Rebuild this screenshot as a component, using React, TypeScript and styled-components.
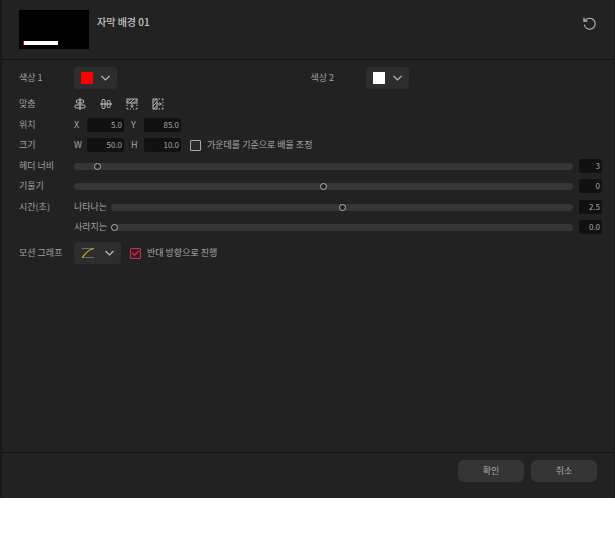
import React, { useState } from 'react';
import styled, { createGlobalStyle, css } from 'styled-components';

const GlobalStyle = createGlobalStyle`
  *, *::before, *::after { box-sizing: border-box; }
  body { margin: 0; background: #fff; }
  body, button, input {
    font-family: "Noto Sans CJK KR", sans-serif;
    font-size: 9px;
    line-height: 12px;
    color: #a6a6a6;
  }
`;

const Panel = styled.main`
  display: flex;
  flex-direction: column;
  min-height: calc(100vh - 37px);
  background: #222;
  border: solid #191919;
  border-width: 1px 1px 0 2px;
  border-top-color: #1a2523;
`;

const Header = styled.header`
  display: flex;
  align-items: flex-start;
  gap: 8px;
  padding: 9px 18px 10px 17px;
  border-bottom: 1px solid #121212;
`;

const Thumbnail = styled.div`
  display: flex;
  align-items: flex-end;
  width: 70px;
  height: 39px;
  padding: 4px;
  background: #000;
`;

const CaptionBar = styled.div`
  width: 35px;
  height: 4px;
  background: #fff;
  border-left: 1px solid #f00;
`;

const Title = styled.h1`
  flex: 1;
  margin: 5px 0 0;
  font-size: 10px;
  line-height: 14px;
  font-weight: 500;
  color: #c4c4c4;
`;

const IconButton = styled.button`
  display: flex;
  padding: 0;
  border: 0;
  background: none;
  color: #b8b8b8;
`;

const ResetButton = styled(IconButton)`
  margin-top: 7px;
`;

const Body = styled.div`
  flex: 1;
  display: flex;
  flex-direction: column;
  gap: 5px;
  padding: 7px 12px 24px 17px;
`;

const Columns = styled.div`
  display: grid;
  grid-template-columns: 1fr 1fr;
`;

const Groups = styled.div`
  display: grid;
  gap: 1px;
`;

const Row = styled.div<{ $tall?: boolean }>`
  display: grid;
  grid-template-columns: 55px 1fr;
  align-items: center;
  height: ${(p) => (p.$tall ? 22 : 20)}px;
`;

const labelText = css`
  color: #a0a0a0;
  white-space: nowrap;
`;
const Label = styled.label`${labelText}`;
const Caption = styled.span`${labelText}`;

const Controls = styled.div<{ $gap?: number }>`
  display: flex;
  align-items: center;
  gap: ${(p) => p.$gap ?? 7}px;
`;

const Axis = styled.label`
  display: grid;
  grid-template-columns: 13px 37px;
  align-items: center;
`;

const NumberBox = styled.input`
  width: 100%;
  height: 14px;
  padding: 0 2px 2px;
  border: 0;
  border-radius: 2px;
  background: #111;
  font-size: 8px;
  text-align: right;
  outline: none;
`;

const DropButton = styled.button<{ $gap?: number }>`
  display: flex;
  align-items: center;
  gap: ${(p) => p.$gap ?? 8}px;
  height: 22px;
  padding: 0 7px;
  border: 0;
  border-radius: 3px;
  background: #2d2d2d;
  color: #b8b8b8;
`;

const Swatch = styled.span<{ $color: string }>`
  width: 12px;
  height: 12px;
  background: ${(p) => p.$color};
`;

const SliderLine = styled.div<{ $named?: boolean }>`
  display: grid;
  grid-template-columns: ${(p) => (p.$named ? '37px ' : '')}1fr 23px;
  align-items: center;
`;

const thumb = css`
  appearance: none;
  width: 7px;
  height: 7px;
  border: 1px solid #b4b4b4;
  border-radius: 50%;
  background: #222;
`;

const Range = styled.input`
  appearance: none;
  width: calc(100% - 6px);
  height: 7px;
  margin: 0;
  border-radius: 4px;
  background: #363636;
  &::-webkit-slider-thumb { ${thumb} }
  &::-moz-range-thumb { ${thumb} }
`;

const CheckLabel = styled.label`
  display: flex;
  align-items: center;
  gap: 6px;
  margin-left: 2px;
  white-space: nowrap;
`;

const CheckBox = styled.input`
  appearance: none;
  display: grid;
  place-items: center;
  width: 11px;
  height: 11px;
  margin: 0;
  border: 1px solid #a8a8a8;
  border-radius: 1px;
  background: #2b2b2b;
  &:checked { border-color: #cc2f4d; background: #3c1c24; }
  &:checked::before {
    content: "";
    width: 7px;
    height: 4px;
    margin-bottom: 2px;
    border: solid #e0355a;
    border-width: 0 0 1px 1px;
    transform: rotate(-45deg);
  }
`;

const Footer = styled.footer`
  display: flex;
  justify-content: flex-end;
  gap: 7px;
  padding: 7px 17px 16px;
  border-top: 1px solid #121212;
`;

const ActionButton = styled.button`
  width: 66px;
  height: 22px;
  padding: 0;
  border: 0;
  border-radius: 6px;
  background: #353535;
`;

const Chevron = () => (
  <svg width="9" height="6" viewBox="0 0 9 6" fill="none" stroke="currentColor" strokeWidth="1.2">
    <path d="M.5 1 4.500 5 8.500 1" />
  </svg>
);

const ResetIcon = () => (
  <svg width="13" height="13" viewBox="0 0 13 13" fill="none" stroke="currentColor" strokeWidth="1.1">
    <path d="M2.300 3.300A5.500 5.500 0 1 1 1.200 7.500" />
    <path d="M1 .8v3.200h3.300" strokeWidth="1.300" />
  </svg>
);

const CenterXIcon = () => (
  <svg width="12" height="12" viewBox="0 0 12 12" fill="none" stroke="currentColor">
    <path d="M6 0v12" strokeWidth="1.200" />
    <rect x="2.500" y="2" width="7" height="3" rx="1" />
    <rect x="1" y="7" width="10" height="3" rx="1" />
  </svg>
);

const CenterYIcon = () => (
  <svg width="12" height="12" viewBox="0 0 12 12" fill="none" stroke="currentColor">
    <path d="M0 6h12" strokeWidth="1.200" />
    <rect x="2" y="1.500" width="3" height="9" rx="1" />
    <rect x="7.200" y="2.500" width="3" height="7" rx="1" />
  </svg>
);

const FillTopIcon = () => (
  <svg width="12" height="12" viewBox="0 0 12 12" fill="none" stroke="currentColor">
    <rect x="1" y="1" width="10" height="4" />
    <path d="M1 4.500 4.500 1M4 5l4-4M7.500 5 11 1.500" />
    <path d="M1 6.500V8M1 9.500V11h1.500M4 11h1M7 11h1M9.500 11H11V9.500M11 6.500V8" />
    <path d="M6 5v4.500M4.300 7.500 6 9.200l1.700-1.700" />
  </svg>
);

const FillLeftIcon = () => (
  <svg width="12" height="12" viewBox="0 0 12 12" fill="none" stroke="currentColor">
    <rect x="1" y="1" width="4" height="10" />
    <path d="M1 4.500 4.500 1M1 8l4-4M1.500 11 5 7.500" />
    <path d="M6.500 1H8M9.500 1H11v1.500M11 4v1M11 7v1M11 9.500V11H9.500M6.500 11H8" />
    <path d="M5 6h4.500M7.500 4.300 9.200 6 7.500 7.700" />
  </svg>
);

const GraphIcon = () => (
  <svg width="14" height="12" viewBox="0 0 14 12" fill="none">
    <path d="M1 1.500h12M1 10.500h12" stroke="#6c6c6c" />
    <path d="M1 10.500C4 8 6 2.500 13 1.500" stroke="#d5a32c" strokeWidth="1.200" />
  </svg>
);

const ALIGNMENTS = [
  { name: '가로 가운데', Icon: CenterXIcon },
  { name: '세로 가운데', Icon: CenterYIcon },
  { name: '너비 채움', Icon: FillTopIcon },
  { name: '높이 채움', Icon: FillLeftIcon },
];

function ColorRow({ label, color, id }: { label: string; color: string; id: string }) {
  return (
    <Row $tall>
      <Label htmlFor={id}>{label}</Label>
      <Controls>
        <DropButton id={id} type="button" aria-haspopup="dialog">
          <Swatch $color={color} />
          <Chevron />
        </DropButton>
      </Controls>
    </Row>
  );
}

function AxisField({ name, initial }: { name: string; initial: string }) {
  const [value, setValue] = useState(initial);
  return (
    <Axis>
      {name}
      <NumberBox inputMode="decimal" value={value} onChange={(e) => setValue(e.target.value)} />
    </Axis>
  );
}

interface SliderProps {
  label?: string;
  name?: string;
  id: string;
  min: number;
  max: number;
  initial: number;
  digits?: number;
}

function SliderRow({ label, name, id, min, max, initial, digits = 0 }: SliderProps) {
  const [value, setValue] = useState(initial);
  const title = name ?? label;
  return (
    <Row>
      {name ? <Caption>{label}</Caption> : <Label htmlFor={id}>{label}</Label>}
      <SliderLine $named={!!name}>
        {name && <Label htmlFor={id}>{name}</Label>}
        <Range
          id={id}
          type="range"
          min={min}
          max={max}
          step={digits ? 0.1 : 1}
          value={value}
          onChange={(e) => setValue(Number(e.target.value))}
        />
        <NumberBox
          aria-label={title}
          value={value.toFixed(digits)}
          onChange={(e) => setValue(Number(e.target.value) || 0)}
        />
      </SliderLine>
    </Row>
  );
}

export default function App() {
  return (
    <>
      <GlobalStyle />
      <Panel>
        <Header>
          <Thumbnail><CaptionBar /></Thumbnail>
          <Title>자막 배경 01</Title>
          <ResetButton type="button" aria-label="초기화"><ResetIcon /></ResetButton>
        </Header>
        <Body>
          <Columns>
            <ColorRow id="color1" label="색상 1" color="#ff0000" />
            <ColorRow id="color2" label="색상 2" color="#ffffff" />
          </Columns>
          <Groups>
            <Row>
              <Caption>맞춤</Caption>
              <Controls $gap={14}>
                {ALIGNMENTS.map(({ name, Icon }) => (
                  <IconButton key={name} type="button" aria-label={name}><Icon /></IconButton>
                ))}
              </Controls>
            </Row>
            <div>
              <Row>
                <Caption>위치</Caption>
                <Controls>
                  <AxisField name="X" initial="5.0" />
                  <AxisField name="Y" initial="85.0" />
                </Controls>
              </Row>
              <Row>
                <Caption>크기</Caption>
                <Controls>
                  <AxisField name="W" initial="50.0" />
                  <AxisField name="H" initial="10.0" />
                  <CheckLabel>
                    <CheckBox type="checkbox" />
                    가운데를 기준으로 배율 조정
                  </CheckLabel>
                </Controls>
              </Row>
            </div>
            <div>
              <SliderRow id="header-width" label="헤더 너비" min={0} max={75} initial={3} />
              <SliderRow id="slope" label="기울기" min={-50} max={50} initial={0} />
            </div>
            <div>
              <SliderRow id="time-in" label="시간(초)" name="나타나는" min={0} max={5} initial={2.5} digits={1} />
              <SliderRow id="time-out" name="사라지는" min={0} max={5} initial={0} digits={1} />
            </div>
          </Groups>
          <Row $tall>
            <Label htmlFor="graph">모션 그래프</Label>
            <Controls>
              <DropButton id="graph" type="button" aria-haspopup="listbox" $gap={10}>
                <GraphIcon />
                <Chevron />
              </DropButton>
              <CheckLabel>
                <CheckBox type="checkbox" defaultChecked />
                반대 방향으로 진행
              </CheckLabel>
            </Controls>
          </Row>
        </Body>
        <Footer>
          <ActionButton type="button">확인</ActionButton>
          <ActionButton type="button">취소</ActionButton>
        </Footer>
      </Panel>
    </>
  );
}
